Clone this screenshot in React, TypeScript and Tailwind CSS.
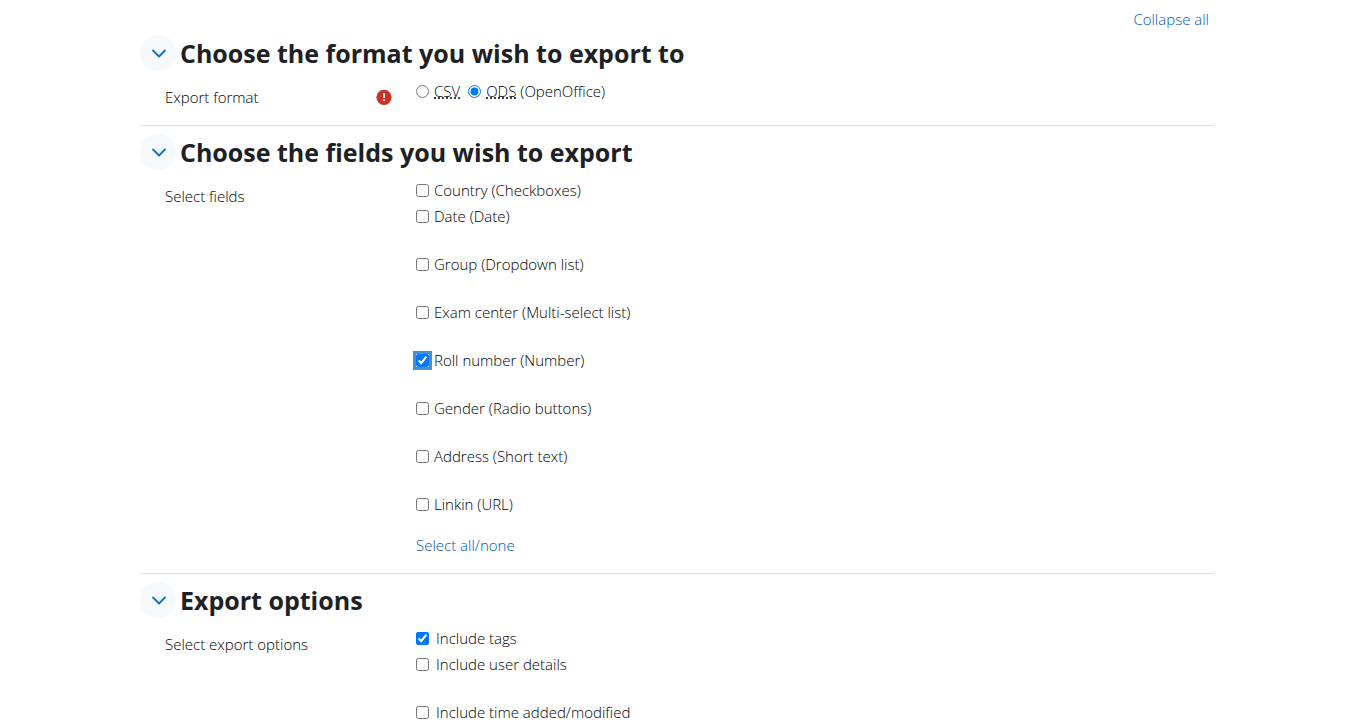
import { useState } from "react";
import type { ReactNode } from "react";

type Option = { id: string; label: string };

const fieldOptions: Option[] = [
  { id: "country", label: "Country (Checkboxes)" },
  { id: "date", label: "Date (Date)" },
  { id: "group", label: "Group (Dropdown list)" },
  { id: "center", label: "Exam center (Multi-select list)" },
  { id: "roll", label: "Roll number (Number)" },
  { id: "gender", label: "Gender (Radio buttons)" },
  { id: "address", label: "Address (Short text)" },
  { id: "linkin", label: "Linkin (URL)" },
];

const exportOptions: Option[] = [
  { id: "tags", label: "Include tags" },
  { id: "user", label: "Include user details" },
  { id: "time", label: "Include time added/modified" },
];

function Section({
  title,
  label,
  required,
  open,
  onToggle,
  className,
  children,
}: {
  title: string;
  label: string;
  required?: boolean;
  open: boolean;
  onToggle: () => void;
  className: string;
  children: ReactNode;
}) {
  return (
    <section className={className}>
      <div className="flex h-9 items-center gap-1">
        <button
          type="button"
          aria-expanded={open}
          aria-label={title}
          onClick={onToggle}
          className="flex size-9 shrink-0 items-center justify-center rounded-full bg-[#f5f9fc] pl-0.5 text-[#0f6cbf]"
        >
          <svg
            viewBox="0 0 16 16"
            className={open ? "size-4" : "size-4 -rotate-90"}
            fill="none"
            stroke="currentColor"
            strokeWidth="1.8"
            strokeLinecap="round"
            strokeLinejoin="round"
          >
            <path d="M2 5.5L8 11.5L14 5.5" />
          </svg>
        </button>
        <h3 className="text-[25px] leading-9 font-bold text-[#1d2125]">{title}</h3>
      </div>
      {open && (
        <div role="group" aria-label={label} className="flex pt-2">
          <div className="flex w-[276px] shrink-0 items-start justify-between pt-1.5 pr-6 pl-[25px]">
            <span>{label}</span>
            {required && (
              <svg viewBox="0 0 16 16" className="mt-1 size-4" role="img" aria-label="Required">
                <circle cx="8" cy="8.3" r="7.6" fill="#ca3120" />
                <path d="M6.9 4.3h2.2l-.4 4.8H7.3z" fill="#fff" />
                <circle cx="8" cy="11.2" r="1.1" fill="#fff" />
              </svg>
            )}
          </div>
          <div className="min-w-0 flex-1">{children}</div>
        </div>
      )}
    </section>
  );
}

function CheckList({
  options,
  checked,
  onToggle,
  wide,
}: {
  options: Option[];
  checked: string[];
  onToggle: (id: string) => void;
  wide?: boolean;
}) {
  return (
    <ul className="space-y-6">
      {options.map((o, i) => (
        <li key={o.id} className={i === 0 ? "mb-0.5 flex" : "flex"}>
          <label className={wide ? "flex items-center gap-[7px]" : "flex items-center gap-[5px]"}>
            <input
              type="checkbox"
              autoFocus={o.id === "roll"}
              checked={checked.includes(o.id)}
              onChange={() => onToggle(o.id)}
              className="size-[13px] accent-[#0075ff] outline-none focus:shadow-[0_0_0_3px_#4a90d0]"
            />
            {o.label}
          </label>
        </li>
      ))}
    </ul>
  );
}

export default function App() {
  const [format, setFormat] = useState("ods");
  const [fields, setFields] = useState<string[]>(["roll"]);
  const [extras, setExtras] = useState<string[]>(["tags"]);
  const [open, setOpen] = useState([true, true, true]);

  const flip = (list: string[], id: string) =>
    list.includes(id) ? list.filter((x) => x !== id) : [...list, id];
  const toggleSection = (n: number) => setOpen(open.map((v, i) => (i === n ? !v : v)));
  const anyOpen = open.some(Boolean);

  return (
    <form className="bg-white pt-[7px] pr-[131px] pl-[140px] font-['Open_Sans','Noto_Sans',sans-serif] text-[15px] leading-6 font-light text-black">
      <div className="flex justify-end pr-[5px]">
        <a
          href="#sections"
          className="text-[#0058b0]"
          onClick={(e) => {
            e.preventDefault();
            setOpen(open.map(() => !anyOpen));
          }}
        >
          {anyOpen ? "Collapse all" : "Expand all"}
        </a>
      </div>

      <Section
        title="Choose the format you wish to export to"
        label="Export format"
        required
        open={open[0]}
        onToggle={() => toggleSection(0)}
        className="pt-1 pb-4"
      >
        <div className="flex items-center gap-2 pb-1.5">
          <label className="flex items-center gap-[5px]">
            <input
              type="radio"
              name="format"
              className="size-[13px] accent-[#0075ff]"
              checked={format === "csv"}
              onChange={() => setFormat("csv")}
            />
            <abbr title="Comma-separated values" className="underline decoration-dotted">
              CSV
            </abbr>
          </label>
          <label className="flex items-center gap-[5px]">
            <input
              type="radio"
              name="format"
              className="size-[13px] accent-[#0075ff]"
              checked={format === "ods"}
              onChange={() => setFormat("ods")}
            />
            <span>
              <abbr title="OpenDocument Spreadsheet" className="underline decoration-dotted">
                ODS
              </abbr>{" "}
              (OpenOffice)
            </span>
          </label>
        </div>
      </Section>

      <Section
        title="Choose the fields you wish to export"
        label="Select fields"
        open={open[1]}
        onToggle={() => toggleSection(1)}
        className="border-t border-[#dee2e6] pt-2 pb-4"
      >
        <CheckList options={fieldOptions} checked={fields} onToggle={(id) => setFields(flip(fields, id))} />
        <div className="mt-[17px] flex">
          <a
            href="#fields"
            className="text-[#0058b0]"
            onClick={(e) => {
              e.preventDefault();
              setFields(fields.length === fieldOptions.length ? [] : fieldOptions.map((o) => o.id));
            }}
          >
            Select all/none
          </a>
        </div>
      </Section>

      <Section
        title="Export options"
        label="Select export options"
        open={open[2]}
        onToggle={() => toggleSection(2)}
        className="border-t border-[#dee2e6] pt-2"
      >
        <CheckList wide options={exportOptions} checked={extras} onToggle={(id) => setExtras(flip(extras, id))} />
      </Section>
    </form>
  );
}
